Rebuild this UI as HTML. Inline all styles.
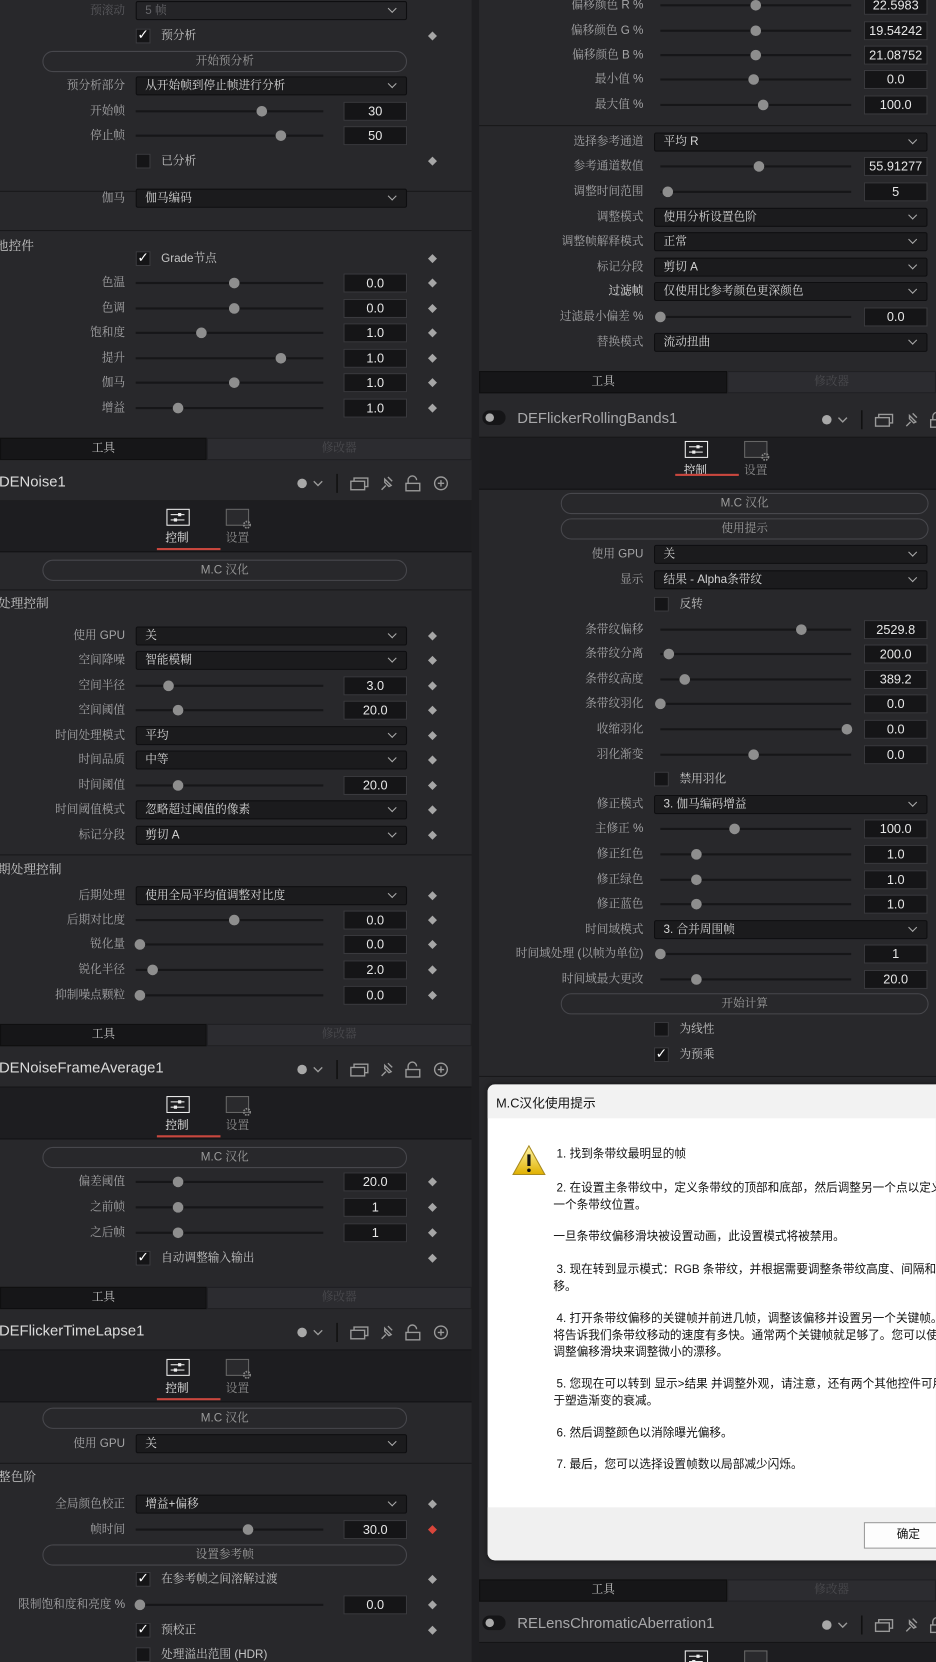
<!DOCTYPE html>
<html><head><meta charset="utf-8"><style>
html,body{margin:0;padding:0;background:#28282b;overflow:hidden;width:936px;height:1662px}
#w{position:relative;width:883px;height:1568px;transform:scale(1.06);transform-origin:0 0;overflow:hidden;background:#28282b;font-family:"Liberation Sans","Noto Serif CJK SC",serif;}
.c{position:absolute;top:0;width:445px;height:1568px;background:#28282b}
.r{position:absolute;left:0;width:445px;height:18px}
.l{position:absolute;right:327px;top:0;line-height:18px;color:#a4a4a6;font-size:11px;white-space:nowrap}
.dd{position:absolute;left:128px;width:256px;top:0;height:18px;background:#1b1b1d;border:1px solid #0e0e10;box-sizing:border-box;border-radius:2px;color:#d6d6d6;font-size:11px;line-height:16px;padding-left:8px;white-space:nowrap}
.dd::after{content:"";position:absolute;right:10px;top:3px;width:5px;height:5px;border-right:1px solid #aaa;border-bottom:1px solid #aaa;transform:rotate(45deg)}
.t{position:absolute;left:128px;width:177px;top:8px;height:2px;background:#161618}
.k{position:absolute;top:4px;width:10px;height:10px;border-radius:50%;background:#8e8e8e}
.v{position:absolute;left:324px;width:60px;top:0;height:18px;background:#151517;border:1px solid #3a3a3e;box-sizing:border-box;color:#e8e8e8;font-size:12px;line-height:16px;text-align:center}
.d{position:absolute;left:405px;top:6px;width:6px;height:6px;background:#a6a6a6;transform:rotate(45deg)}
.x{position:absolute;left:128px;top:2px;width:14px;height:14px;background:#151517;border:1px solid #3c3c40;box-sizing:border-box;color:#fff;font-size:13px;line-height:12px;text-align:center;font-family:"DejaVu Sans",sans-serif}
.xl{position:absolute;left:152px;top:0;line-height:18px;color:#c4c4c4;font-size:11px;white-space:nowrap}
.b{position:absolute;left:40px;width:344px;top:-1px;height:20px;border:1px solid #47474c;border-radius:10px;box-sizing:border-box;text-align:center;color:#9c9c9c;font-size:11px;line-height:18px}
.sh{position:absolute;left:0;top:0;line-height:18px;color:#c8c8c8;font-size:12px;white-space:nowrap}
.hr{position:absolute;left:0;width:445px;height:1px;background:#18181a}
.tb{position:absolute;left:0;width:445px;height:21px}
.tb .a{position:absolute;left:0;top:0;width:195px;height:21px;background:#161618;border:1px solid #0f0f10;box-sizing:border-box;color:#c8c8c8;font-size:11px;line-height:19px;text-align:center}
.tb .m{position:absolute;left:195px;top:0;width:250px;height:21px;background:#2c2c30;border:1px solid #202023;box-sizing:border-box;color:#4a4a4e;font-size:11px;line-height:19px;text-align:center}
.hd{position:absolute;left:0;width:445px;height:34px;border-bottom:1px solid #141416}
.hd .n{position:absolute;left:-1px;top:8px;font-size:14px;color:#dcdcdc;font-family:"Liberation Sans",sans-serif;white-space:nowrap}
.hd svg{position:absolute;left:278px;top:7px}
.st{position:absolute;left:0;width:445px;height:48px;background:#1d1d20;border-bottom:1px solid #121214}
.ic1{position:absolute;left:157px;top:8px;width:22px;height:16px;border:1.5px solid #eee;box-sizing:border-box}
.ic1 i{position:absolute;left:3px;width:13px;height:1px;background:#eee}
.ic1 b{position:absolute;width:3px;height:3px;background:#eee}
.ic2{position:absolute;left:213px;top:8px;width:22px;height:16px;border:1px solid #666;box-sizing:border-box;background:#2a2a2d}
.lb1{position:absolute;left:156px;top:27px;font-size:11px;color:#eee}
.lb2{position:absolute;left:213px;top:27px;font-size:11px;color:#8a8a8a}
.ul{position:absolute;left:148px;top:45px;width:60px;height:2px;background:#c9473e}
.dl{position:absolute;font-family:"Liberation Sans","Noto Sans CJK SC",sans-serif;font-size:11px;color:#111;white-space:nowrap;left:522px}
.Rc .t{left:134px;width:180px}.Rc .v{left:326px}.Rc .hr{left:-37px;width:431px}
</style></head><body><div id="w">

<div class="c" style="left:0">
<div class="r" style="top:1px"><span class="l" style="color:#5a5a5e">预滚动</span><div class="dd" style="background:#242427;color:#66666a">5 帧</div></div>
<div class="r" style="top:25px"><div class="x">✓</div><span class="xl">预分析</span><div class="d"></div></div>
<div class="r" style="top:49px"><div class="b">开始预分析</div></div>
<div class="r" style="top:72px"><span class="l">预分析部分</span><div class="dd">从开始帧到停止帧进行分析</div></div>
<div class="r" style="top:96px"><span class="l">开始帧</span><div class="t"></div><div class="k" style="left:242px"></div><div class="v">30</div></div>
<div class="r" style="top:119px"><span class="l">停止帧</span><div class="t"></div><div class="k" style="left:260px"></div><div class="v">50</div></div>
<div class="r" style="top:143px"><div class="x"></div><span class="xl">已分析</span><div class="d"></div></div>
<div class="hr" style="top:180px"></div>
<div class="r" style="top:178px"><span class="l">伽马</span><div class="dd">伽马编码</div></div>
<div class="hr" style="top:217px"></div>
<div class="r" style="top:223px"><span class="sh" style="left:-4px">他控件</span></div>
<div class="r" style="top:235px"><div class="x">✓</div><span class="xl">Grade节点</span><div class="d"></div></div>
<div class="r" style="top:258px"><span class="l">色温</span><div class="t"></div><div class="k" style="left:216px"></div><div class="v">0.0</div><div class="d"></div></div>
<div class="r" style="top:282px"><span class="l">色调</span><div class="t"></div><div class="k" style="left:216px"></div><div class="v">0.0</div><div class="d"></div></div>
<div class="r" style="top:305px"><span class="l">饱和度</span><div class="t"></div><div class="k" style="left:185px"></div><div class="v">1.0</div><div class="d"></div></div>
<div class="r" style="top:329px"><span class="l">提升</span><div class="t"></div><div class="k" style="left:260px"></div><div class="v">1.0</div><div class="d"></div></div>
<div class="r" style="top:352px"><span class="l">伽马</span><div class="t"></div><div class="k" style="left:216px"></div><div class="v">1.0</div><div class="d"></div></div>
<div class="r" style="top:376px"><span class="l">增益</span><div class="t"></div><div class="k" style="left:163px"></div><div class="v">1.0</div><div class="d"></div></div>

<div class="tb" style="top:413px"><div class="a">工具</div><div class="m">修改器</div></div>
<div class="hd" style="top:438px"><span class="n">DENoise1</span>
<svg width="150" height="22" viewBox="0 0 150 22" fill="none" stroke="#9a9a9a" stroke-width="1.3"><circle cx="7" cy="11" r="4.5" fill="#a8a8a8" stroke="none"/><path d="M18 9l4 4 4-4"/><path d="M40 2v18" stroke="#111" stroke-width="1.5"/><rect x="53" y="9" width="13" height="8"/><path d="M56 9V6h13v8h-3"/><path d="M82 17l4-4m-1-6l6 6-2 1-4-4zM88 5l4 4"/><rect x="105" y="11" width="13" height="7"/><path d="M107 11V8a4 4 0 0 1 8 0"/><circle cx="138" cy="11" r="6"/><path d="M135 11h6M138 8v6"/></svg></div>
<div class="st" style="top:472px"><div class="ic1"><i style="top:4px"></i><i style="top:9px"></i><b style="left:10px;top:3px"></b><b style="left:6px;top:8px"></b></div><div class="ic2"></div><svg style="position:absolute;left:228px;top:18px" width="10" height="10" viewBox="0 0 10 10"><circle cx="5" cy="5" r="3" fill="none" stroke="#888" stroke-width="1.6" stroke-dasharray="1.5 1"/></svg><span class="lb1">控制</span><span class="lb2">设置</span><div class="ul"></div></div>
<div class="r" style="top:529px"><div class="b">M.C 汉化</div></div>
<div class="hr" style="top:556px"></div>
<div class="r" style="top:560px"><span class="sh" style="left:-2px">处理控制</span></div>
<div class="r" style="top:591px"><span class="l">使用 GPU</span><div class="dd">关</div><div class="d"></div></div>
<div class="r" style="top:614px"><span class="l">空间降噪</span><div class="dd">智能模糊</div><div class="d"></div></div>
<div class="r" style="top:638px"><span class="l">空间半径</span><div class="t"></div><div class="k" style="left:154px"></div><div class="v">3.0</div><div class="d"></div></div>
<div class="r" style="top:661px"><span class="l">空间阈值</span><div class="t"></div><div class="k" style="left:163px"></div><div class="v">20.0</div><div class="d"></div></div>
<div class="r" style="top:685px"><span class="l">时间处理模式</span><div class="dd">平均</div><div class="d"></div></div>
<div class="r" style="top:708px"><span class="l">时间品质</span><div class="dd">中等</div><div class="d"></div></div>
<div class="r" style="top:732px"><span class="l">时间阈值</span><div class="t"></div><div class="k" style="left:163px"></div><div class="v">20.0</div><div class="d"></div></div>
<div class="r" style="top:755px"><span class="l">时间阈值模式</span><div class="dd">忽略超过阈值的像素</div><div class="d"></div></div>
<div class="r" style="top:779px"><span class="l">标记分段</span><div class="dd">剪切 A</div><div class="d"></div></div>
<div class="hr" style="top:806px"></div>
<div class="r" style="top:811px"><span class="sh" style="left:-2px">期处理控制</span></div>
<div class="r" style="top:836px"><span class="l">后期处理</span><div class="dd">使用全局平均值调整对比度</div><div class="d"></div></div>
<div class="r" style="top:859px"><span class="l">后期对比度</span><div class="t"></div><div class="k" style="left:216px"></div><div class="v">0.0</div><div class="d"></div></div>
<div class="r" style="top:882px"><span class="l">锐化量</span><div class="t"></div><div class="k" style="left:127px"></div><div class="v">0.0</div><div class="d"></div></div>
<div class="r" style="top:906px"><span class="l">锐化半径</span><div class="t"></div><div class="k" style="left:139px"></div><div class="v">2.0</div><div class="d"></div></div>
<div class="r" style="top:930px"><span class="l">抑制噪点颗粒</span><div class="t"></div><div class="k" style="left:127px"></div><div class="v">0.0</div><div class="d"></div></div>

<div class="tb" style="top:966px"><div class="a">工具</div><div class="m">修改器</div></div>
<div class="hd" style="top:991px"><span class="n">DENoiseFrameAverage1</span>
<svg width="150" height="22" viewBox="0 0 150 22" fill="none" stroke="#9a9a9a" stroke-width="1.3"><circle cx="7" cy="11" r="4.5" fill="#a8a8a8" stroke="none"/><path d="M18 9l4 4 4-4"/><path d="M40 2v18" stroke="#111" stroke-width="1.5"/><rect x="53" y="9" width="13" height="8"/><path d="M56 9V6h13v8h-3"/><path d="M82 17l4-4m-1-6l6 6-2 1-4-4zM88 5l4 4"/><rect x="105" y="11" width="13" height="7"/><path d="M107 11V8a4 4 0 0 1 8 0"/><circle cx="138" cy="11" r="6"/><path d="M135 11h6M138 8v6"/></svg></div>
<div class="st" style="top:1026px"><div class="ic1"><i style="top:4px"></i><i style="top:9px"></i><b style="left:10px;top:3px"></b><b style="left:6px;top:8px"></b></div><div class="ic2"></div><svg style="position:absolute;left:228px;top:18px" width="10" height="10" viewBox="0 0 10 10"><circle cx="5" cy="5" r="3" fill="none" stroke="#888" stroke-width="1.6" stroke-dasharray="1.5 1"/></svg><span class="lb1">控制</span><span class="lb2">设置</span><div class="ul"></div></div>
<div class="r" style="top:1083px"><div class="b">M.C 汉化</div></div>
<div class="r" style="top:1106px"><span class="l">偏差阈值</span><div class="t"></div><div class="k" style="left:163px"></div><div class="v">20.0</div><div class="d"></div></div>
<div class="r" style="top:1130px"><span class="l">之前帧</span><div class="t"></div><div class="k" style="left:163px"></div><div class="v">1</div><div class="d"></div></div>
<div class="r" style="top:1154px"><span class="l">之后帧</span><div class="t"></div><div class="k" style="left:163px"></div><div class="v">1</div><div class="d"></div></div>
<div class="r" style="top:1178px"><div class="x">✓</div><span class="xl">自动调整输入输出</span><div class="d"></div></div>

<div class="tb" style="top:1214px"><div class="a">工具</div><div class="m">修改器</div></div>
<div class="hd" style="top:1239px"><span class="n">DEFlickerTimeLapse1</span>
<svg width="150" height="22" viewBox="0 0 150 22" fill="none" stroke="#9a9a9a" stroke-width="1.3"><circle cx="7" cy="11" r="4.5" fill="#a8a8a8" stroke="none"/><path d="M18 9l4 4 4-4"/><path d="M40 2v18" stroke="#111" stroke-width="1.5"/><rect x="53" y="9" width="13" height="8"/><path d="M56 9V6h13v8h-3"/><path d="M82 17l4-4m-1-6l6 6-2 1-4-4zM88 5l4 4"/><rect x="105" y="11" width="13" height="7"/><path d="M107 11V8a4 4 0 0 1 8 0"/><circle cx="138" cy="11" r="6"/><path d="M135 11h6M138 8v6"/></svg></div>
<div class="st" style="top:1274px"><div class="ic1"><i style="top:4px"></i><i style="top:9px"></i><b style="left:10px;top:3px"></b><b style="left:6px;top:8px"></b></div><div class="ic2"></div><svg style="position:absolute;left:228px;top:18px" width="10" height="10" viewBox="0 0 10 10"><circle cx="5" cy="5" r="3" fill="none" stroke="#888" stroke-width="1.6" stroke-dasharray="1.5 1"/></svg><span class="lb1">控制</span><span class="lb2">设置</span><div class="ul"></div></div>
<div class="r" style="top:1329px"><div class="b">M.C 汉化</div></div>
<div class="r" style="top:1353px"><span class="l">使用 GPU</span><div class="dd">关</div></div>
<div class="hr" style="top:1380px"></div>
<div class="r" style="top:1384px"><span class="sh" style="left:-2px">整色阶</span></div>
<div class="r" style="top:1410px"><span class="l">全局颜色校正</span><div class="dd">增益+偏移</div><div class="d"></div></div>
<div class="r" style="top:1434px"><span class="l">帧时间</span><div class="t"></div><div class="k" style="left:229px"></div><div class="v">30.0</div><div class="d" style="background:#d9463b"></div></div>
<div class="r" style="top:1458px"><div class="b">设置参考帧</div></div>
<div class="r" style="top:1481px"><div class="x">✓</div><span class="xl">在参考帧之间溶解过渡</span><div class="d"></div></div>
<div class="r" style="top:1505px"><span class="l">限制饱和度和亮度 %</span><div class="t"></div><div class="k" style="left:127px"></div><div class="v">0.0</div><div class="d"></div></div>
<div class="r" style="top:1529px"><div class="x">✓</div><span class="xl">预校正</span><div class="d"></div></div>
<div class="r" style="top:1552px"><div class="x"></div><span class="xl">处理溢出范围 (HDR)</span></div>
</div>

<div style="position:absolute;left:445px;top:0;width:7px;height:1568px;background:#1e1e21"></div>

<div class="c" style="left:489px;width:445px;background:transparent">
<div style="position:absolute;left:-37px;top:0;width:431px;height:1568px;background:#28282b"></div>
<div class="Rc" style="position:absolute;left:0;top:0;width:445px;height:1568px">
<div class="r" style="top:-4px"><span class="l">偏移颜色 R %</span><div class="t"></div><div class="k" style="left:219px"></div><div class="v">22.5983</div></div>
<div class="r" style="top:20px"><span class="l">偏移颜色 G %</span><div class="t"></div><div class="k" style="left:219px"></div><div class="v">19.54242</div></div>
<div class="r" style="top:43px"><span class="l">偏移颜色 B %</span><div class="t"></div><div class="k" style="left:219px"></div><div class="v">21.08752</div></div>
<div class="r" style="top:66px"><span class="l">最小值 %</span><div class="t"></div><div class="k" style="left:217px"></div><div class="v">0.0</div></div>
<div class="r" style="top:90px"><span class="l">最大值 %</span><div class="t"></div><div class="k" style="left:226px"></div><div class="v">100.0</div></div>
<div class="hr" style="top:118px"></div>
<div class="r" style="top:125px"><span class="l">选择参考通道</span><div class="dd" style="width:258px">平均 R</div></div>
<div class="r" style="top:148px"><span class="l">参考通道数值</span><div class="t"></div><div class="k" style="left:222px"></div><div class="v">55.91277</div></div>
<div class="r" style="top:172px"><span class="l">调整时间范围</span><div class="t"></div><div class="k" style="left:136px"></div><div class="v">5</div></div>
<div class="r" style="top:196px"><span class="l">调整模式</span><div class="dd" style="width:258px">使用分析设置色阶</div></div>
<div class="r" style="top:219px"><span class="l">调整帧解释模式</span><div class="dd" style="width:258px">正常</div></div>
<div class="r" style="top:243px"><span class="l">标记分段</span><div class="dd" style="width:258px">剪切 A</div></div>
<div class="r" style="top:266px"><span class="l" style="color:#e0e0e0">过滤帧</span><div class="dd" style="width:258px">仅使用比参考颜色更深颜色</div></div>
<div class="r" style="top:290px"><span class="l">过滤最小偏差 %</span><div class="t"></div><div class="k" style="left:129px"></div><div class="v">0.0</div></div>
<div class="r" style="top:314px"><span class="l">替换模式</span><div class="dd" style="width:258px">流动扭曲</div></div>

<div class="tb" style="top:350px;left:-37px;width:431px"><div class="a" style="width:234px">工具</div><div class="m" style="left:234px;width:197px">修改器</div></div>
<div class="hd" style="top:378px;left:-37px;width:431px"><svg style="left:3px;top:9px" width="22" height="14" viewBox="0 0 22 14"><rect x="0" y="0" width="22" height="14" rx="7" fill="#151517"/><circle cx="7" cy="7" r="4" fill="#aaa"/></svg><span class="n" style="left:36px;color:#a8a8aa">DEFlickerRollingBands1</span>
<svg style="left:321px" width="150" height="22" viewBox="0 0 150 22" fill="none" stroke="#9a9a9a" stroke-width="1.3"><circle cx="7" cy="11" r="4.5" fill="#a8a8a8" stroke="none"/><path d="M18 9l4 4 4-4"/><path d="M40 2v18" stroke="#111" stroke-width="1.5"/><rect x="53" y="9" width="13" height="8"/><path d="M56 9V6h13v8h-3"/><path d="M82 17l4-4m-1-6l6 6-2 1-4-4zM88 5l4 4"/><rect x="105" y="11" width="13" height="7"/><path d="M107 11V8a4 4 0 0 1 8 0"/></svg></div>
<div class="st" style="top:413px;left:-37px;width:431px"><div style="position:absolute;left:37px;top:-5px;width:300px;height:48px"><div class="ic1"><i style="top:4px"></i><i style="top:9px"></i><b style="left:10px;top:3px"></b><b style="left:6px;top:8px"></b></div><div class="ic2"></div><svg style="position:absolute;left:228px;top:18px" width="10" height="10" viewBox="0 0 10 10"><circle cx="5" cy="5" r="3" fill="none" stroke="#888" stroke-width="1.6" stroke-dasharray="1.5 1"/></svg><span class="lb1">控制</span><span class="lb2">设置</span><div class="ul" style="top:39px"></div></div></div>
<div class="r" style="top:466px"><div class="b" style="width:347px">M.C 汉化</div></div>
<div class="r" style="top:490px"><div class="b" style="width:347px">使用提示</div></div>
<div class="r" style="top:514px"><span class="l">使用 GPU</span><div class="dd" style="width:258px">关</div></div>
<div class="r" style="top:538px"><span class="l">显示</span><div class="dd" style="width:258px">结果 - Alpha条带纹</div></div>
<div class="r" style="top:561px"><div class="x"></div><span class="xl">反转</span></div>
<div class="r" style="top:585px"><span class="l">条带纹偏移</span><div class="t"></div><div class="k" style="left:262px"></div><div class="v">2529.8</div></div>
<div class="r" style="top:608px"><span class="l">条带纹分离</span><div class="t"></div><div class="k" style="left:137px"></div><div class="v">200.0</div></div>
<div class="r" style="top:632px"><span class="l">条带纹高度</span><div class="t"></div><div class="k" style="left:152px"></div><div class="v">389.2</div></div>
<div class="r" style="top:655px"><span class="l">条带纹羽化</span><div class="t"></div><div class="k" style="left:129px"></div><div class="v">0.0</div></div>
<div class="r" style="top:679px"><span class="l">收缩羽化</span><div class="t"></div><div class="k" style="left:305px"></div><div class="v">0.0</div></div>
<div class="r" style="top:703px"><span class="l">羽化渐变</span><div class="t"></div><div class="k" style="left:217px"></div><div class="v">0.0</div></div>
<div class="r" style="top:726px"><div class="x"></div><span class="xl">禁用羽化</span></div>
<div class="r" style="top:750px"><span class="l">修正模式</span><div class="dd" style="width:258px">3. 伽马编码增益</div></div>
<div class="r" style="top:773px"><span class="l">主修正 %</span><div class="t"></div><div class="k" style="left:199px"></div><div class="v">100.0</div></div>
<div class="r" style="top:797px"><span class="l">修正红色</span><div class="t"></div><div class="k" style="left:163px"></div><div class="v">1.0</div></div>
<div class="r" style="top:821px"><span class="l">修正绿色</span><div class="t"></div><div class="k" style="left:163px"></div><div class="v">1.0</div></div>
<div class="r" style="top:844px"><span class="l">修正蓝色</span><div class="t"></div><div class="k" style="left:163px"></div><div class="v">1.0</div></div>
<div class="r" style="top:868px"><span class="l">时间域模式</span><div class="dd" style="width:258px">3. 合并周围帧</div></div>
<div class="r" style="top:891px"><span class="l">时间域处理 (以帧为单位)</span><div class="t"></div><div class="k" style="left:129px"></div><div class="v">1</div></div>
<div class="r" style="top:915px"><span class="l">时间域最大更改</span><div class="t"></div><div class="k" style="left:163px"></div><div class="v">20.0</div></div>
<div class="r" style="top:938px"><div class="b" style="width:347px">开始计算</div></div>
<div class="r" style="top:962px"><div class="x"></div><span class="xl">为线性</span></div>
<div class="r" style="top:986px"><div class="x">✓</div><span class="xl">为预乘</span></div>
<div class="hr" style="top:1015px"></div>

<div class="tb" style="top:1490px;left:-37px;width:431px"><div class="a" style="width:234px">工具</div><div class="m" style="left:234px;width:197px">修改器</div></div>
<div class="hd" style="top:1515px;left:-37px;width:431px"><svg style="left:3px;top:9px" width="22" height="14" viewBox="0 0 22 14"><rect x="0" y="0" width="22" height="14" rx="7" fill="#151517"/><circle cx="7" cy="7" r="4" fill="#aaa"/></svg><span class="n" style="left:36px;color:#a8a8aa">RELensChromaticAberration1</span>
<svg style="left:321px" width="150" height="22" viewBox="0 0 150 22" fill="none" stroke="#9a9a9a" stroke-width="1.3"><circle cx="7" cy="11" r="4.5" fill="#a8a8a8" stroke="none"/><path d="M18 9l4 4 4-4"/><path d="M40 2v18" stroke="#111" stroke-width="1.5"/><rect x="53" y="9" width="13" height="8"/><path d="M56 9V6h13v8h-3"/><path d="M82 17l4-4m-1-6l6 6-2 1-4-4zM88 5l4 4"/><rect x="105" y="11" width="13" height="7"/><path d="M107 11V8a4 4 0 0 1 8 0"/></svg></div>
<div class="st" style="top:1550px;left:-37px;width:431px"><div style="position:absolute;left:37px;top:-1px;width:300px;height:48px"><div class="ic1"><i style="top:4px"></i><i style="top:9px"></i><b style="left:10px;top:3px"></b><b style="left:6px;top:8px"></b></div><div class="ic2"></div></div></div>
</div>
</div>

<div style="position:absolute;left:460px;top:1023px;width:440px;height:449px;background:#fff;border-radius:7px 0 0 7px;overflow:hidden;box-shadow:0 0 6px rgba(0,0,0,.5)">
<div style="position:absolute;left:0;top:0;width:440px;height:32px;background:#f2f2f2"></div>
<div style="position:absolute;left:8px;top:9px;font-family:'Liberation Sans','Noto Sans CJK SC',sans-serif;font-size:12px;color:#111">M.C汉化使用提示</div>
<div style="position:absolute;left:0;top:399px;width:440px;height:50px;background:#f0f0f0"></div>
<div style="position:absolute;left:355px;top:413px;width:80px;height:25px;border:1px solid #9a9a9a;background:#fdfdfd;box-sizing:border-box;font-family:'Liberation Sans','Noto Sans CJK SC',sans-serif;font-size:11px;line-height:23px;text-align:left;padding-left:30px;color:#111">确定</div>
<svg style="position:absolute;left:23px;top:57px" width="32" height="30" viewBox="0 0 32 30"><defs><linearGradient id="g" x1="0" y1="0" x2="0" y2="1"><stop offset="0" stop-color="#fff6a8"/><stop offset="1" stop-color="#e0b000"/></linearGradient></defs><path d="M16 1L31 28H1z" fill="url(#g)" stroke="#a88a20" stroke-width="1"/><path d="M16 9v11" stroke="#111" stroke-width="3"/><circle cx="16" cy="24" r="1.7" fill="#111"/></svg>
</div>
<div class="dl" style="top:1080px;left:525px">1. 找到条带纹最明显的帧</div>
<div class="dl" style="top:1112px;left:525px">2. 在设置主条带纹中，定义条带纹的顶部和底部，然后调整另一个点以定义下</div>
<div class="dl" style="top:1128px">一个条带纹位置。</div>
<div class="dl" style="top:1158px">一旦条带纹偏移滑块被设置动画，此设置模式将被禁用。</div>
<div class="dl" style="top:1189px;left:525px">3. 现在转到显示模式：RGB 条带纹，并根据需要调整条带纹高度、间隔和偏</div>
<div class="dl" style="top:1205px">移。</div>
<div class="dl" style="top:1235px;left:525px">4. 打开条带纹偏移的关键帧并前进几帧，调整该偏移并设置另一个关键帧。这</div>
<div class="dl" style="top:1251px">将告诉我们条带纹移动的速度有多快。通常两个关键帧就足够了。您可以使用</div>
<div class="dl" style="top:1267px">调整偏移滑块来调整微小的漂移。</div>
<div class="dl" style="top:1297px;left:525px">5. 您现在可以转到 显示&gt;结果 并调整外观，请注意，还有两个其他控件可用</div>
<div class="dl" style="top:1313px">于塑造渐变的衰减。</div>
<div class="dl" style="top:1343px;left:525px">6. 然后调整颜色以消除曝光偏移。</div>
<div class="dl" style="top:1373px;left:525px">7. 最后，您可以选择设置帧数以局部减少闪烁。</div>

</div></body></html>
